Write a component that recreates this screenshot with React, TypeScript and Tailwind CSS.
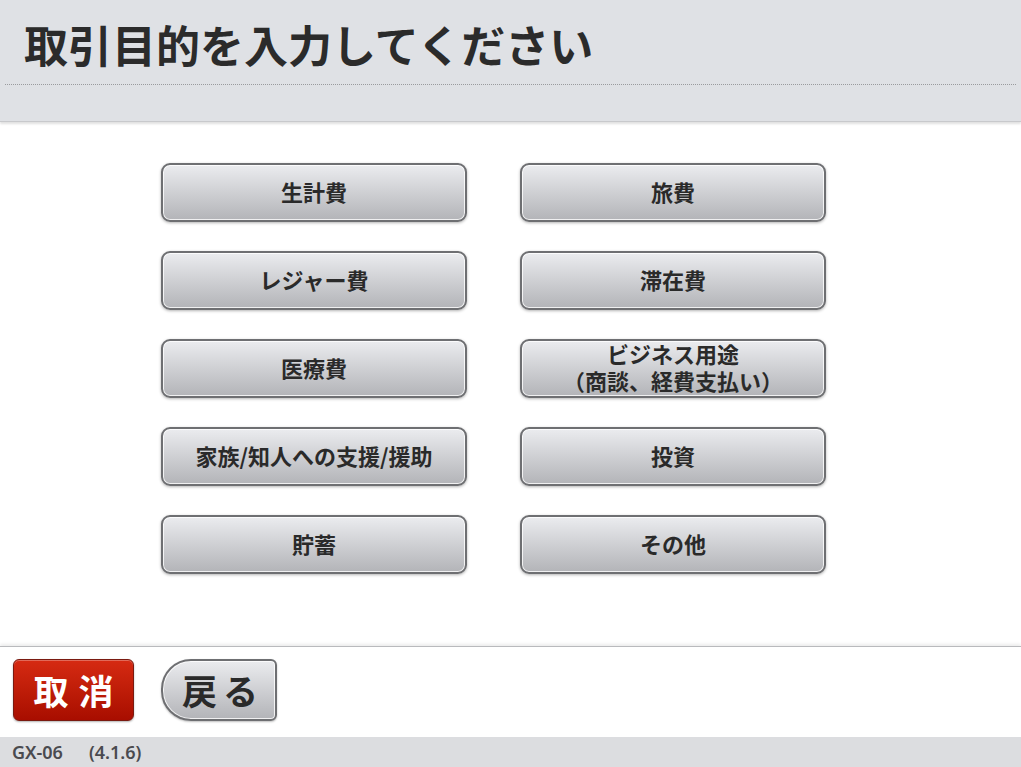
const font = "font-['Noto_Sans_CJK_JP','Noto_Sans',sans-serif]";

const purposes: { label: string; sub?: string }[] = [
  { label: "生計費" },
  { label: "旅費" },
  { label: "レジャー費" },
  { label: "滞在費" },
  { label: "医療費" },
  { label: "ビジネス用途", sub: "（商談、経費支払い）" },
  { label: "家族/知人への支援/援助" },
  { label: "投資" },
  { label: "貯蓄" },
  { label: "その他" },
];

function PurposeButton({ label, sub }: { label: string; sub?: string }) {
  return (
    <button className="flex h-[59px] w-[306px] flex-col items-center justify-center rounded-[9px] border-2 border-[#6e6f72] bg-gradient-to-b from-[#ebecef] to-[#b3b4b8] pb-[3px] text-[22px] leading-[27px] font-bold text-[#2a2a2a] shadow-[inset_0_0_0_1px_rgba(255,255,255,0.8),0_1px_3px_rgba(0,0,0,0.3)]">
      <span>{label}</span>
      {sub && <span>{sub}</span>}
    </button>
  );
}

export default function App() {
  return (
    <div className={`flex h-[767px] w-[1021px] flex-col bg-white ${font}`}>
      {/* Header */}
      <div className="h-[122px] border-b border-[#c8c9cc] bg-[#dfe1e5] shadow-[0_2px_2px_rgba(0,0,0,0.12)]">
        <h1 className="h-[84px] pt-[14px] pl-[24px] text-[44px] leading-[60px] font-bold text-[#2b2b2b]">
          取引目的を入力してください
        </h1>
        <div className="mx-[5px] border-t border-dotted border-[#9a9b9e]" />
      </div>

      {/* Purpose grid */}
      <div className="flex-1 pt-[41px] pl-[161px]">
        <div className="grid w-fit grid-cols-2 gap-x-[53px] gap-y-[29px]">
          {purposes.map((p) => (
            <PurposeButton key={p.label} label={p.label} sub={p.sub} />
          ))}
        </div>
      </div>

      {/* Footer actions */}
      <div className="flex h-[91px] items-start gap-[27px] border-t border-[#b9babd] px-[13px] pt-[12px] shadow-[0_-2px_3px_rgba(0,0,0,0.08)]">
        <button className="flex h-[62px] w-[121px] items-center justify-center rounded-[6px] border border-[#7a1a10] bg-gradient-to-b from-[#d62a12] to-[#a80d00] pb-[2px] pl-[10px] text-[35px] leading-none font-bold tracking-[10px] text-white shadow-[inset_0_1px_0_rgba(255,255,255,0.3),0_1px_2px_rgba(0,0,0,0.3)]">
          取消
        </button>
        <button className="flex h-[62px] w-[116px] items-center justify-center rounded-l-[30px] rounded-r-[6px] border-2 border-[#6e6f72] bg-gradient-to-b from-[#ebecef] to-[#b3b4b8] pb-[2px] pl-[8px] text-[35px] leading-none font-bold tracking-[6px] text-[#2a2a2a] shadow-[inset_0_0_0_1px_rgba(255,255,255,0.8),0_1px_2px_rgba(0,0,0,0.25)]">
          戻る
        </button>
      </div>

      {/* Status bar */}
      <div className="flex h-[30px] items-center gap-[26px] bg-[#dcdde0] pl-[12px] font-['Noto_Sans',sans-serif] text-[18px] font-semibold text-[#4a4a4f]">
        <span>GX-06</span>
        <span>(4.1.6)</span>
      </div>
    </div>
  );
}
